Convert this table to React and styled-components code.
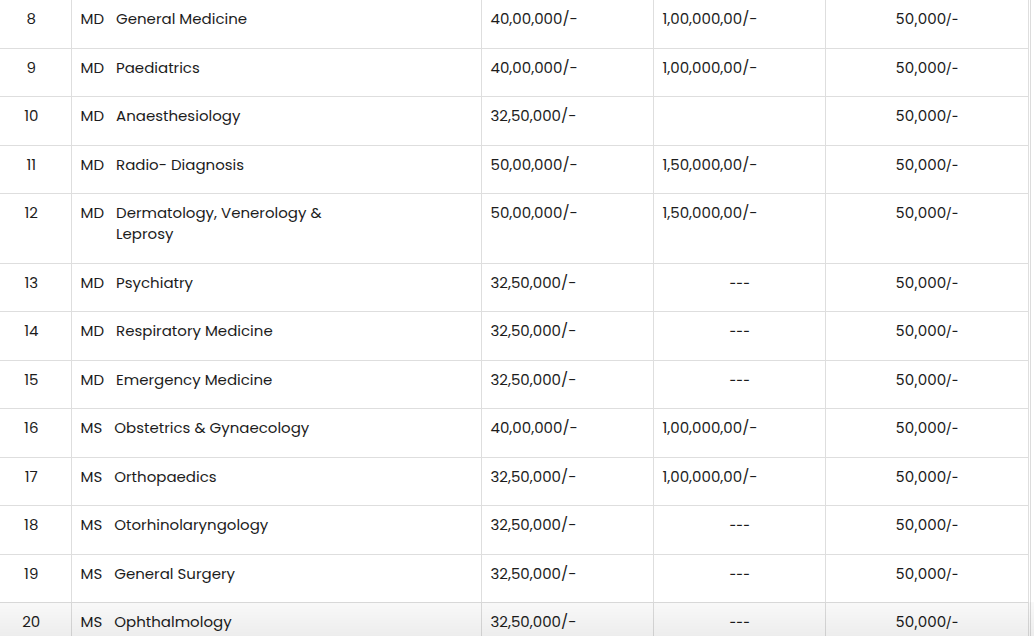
import React from "react";
import styled, { createGlobalStyle } from "styled-components";

const rows = [
  { no: 8, deg: "MD", name: "General Medicine", fee: "40,00,000/-", bond: "1,00,000,00/-", dep: "50,000/-" },
  { no: 9, deg: "MD", name: "Paediatrics", fee: "40,00,000/-", bond: "1,00,000,00/-", dep: "50,000/-" },
  { no: 10, deg: "MD", name: "Anaesthesiology", fee: "32,50,000/-", bond: "", dep: "50,000/-" },
  { no: 11, deg: "MD", name: "Radio- Diagnosis", fee: "50,00,000/-", bond: "1,50,000,00/-", dep: "50,000/-" },
  { no: 12, deg: "MD", name: "Dermatology, Venerology & Leprosy", fee: "50,00,000/-", bond: "1,50,000,00/-", dep: "50,000/-" },
  { no: 13, deg: "MD", name: "Psychiatry", fee: "32,50,000/-", bond: "---", dep: "50,000/-" },
  { no: 14, deg: "MD", name: "Respiratory Medicine", fee: "32,50,000/-", bond: "---", dep: "50,000/-" },
  { no: 15, deg: "MD", name: "Emergency Medicine", fee: "32,50,000/-", bond: "---", dep: "50,000/-" },
  { no: 16, deg: "MS", name: "Obstetrics & Gynaecology", fee: "40,00,000/-", bond: "1,00,000,00/-", dep: "50,000/-" },
  { no: 17, deg: "MS", name: "Orthopaedics", fee: "32,50,000/-", bond: "1,00,000,00/-", dep: "50,000/-" },
  { no: 18, deg: "MS", name: "Otorhinolaryngology", fee: "32,50,000/-", bond: "---", dep: "50,000/-" },
  { no: 19, deg: "MS", name: "General Surgery", fee: "32,50,000/-", bond: "---", dep: "50,000/-" },
  { no: 20, deg: "MS", name: "Ophthalmology", fee: "32,50,000/-", bond: "---", dep: "50,000/-" },
];

const GlobalStyle = createGlobalStyle`
  body {
    margin: 0;
    background: #fff;
    overflow: hidden;
    font-family: "Poppins", "Open Sans", "Noto Sans", sans-serif;
    color: #1c1c1c;
  }
`;

const Wrapper = styled.div`
  width: 1030px;
  border-right: 1px solid #dcdcdc;
  margin-top: -1px;
`;

const Table = styled.table`
  width: 1028px;
  border-collapse: collapse;
  table-layout: fixed;
`;

const Cell = styled.td`
  border: 1px solid #dedede;
  padding: 8px 8px 18.5px 9px;
  vertical-align: top;
  font-size: 15px;
  line-height: 21px;
  text-align: ${(p) => p.align || "left"};
  font-family: ${(p) =>
    p.plain ? `Inter, "Liberation Sans", sans-serif` : "inherit"};

  &:first-child {
    border-left: none;
    padding-left: 0;
  }
`;

const Course = styled.div`
  display: flex;
  align-items: flex-start;
`;

const Degree = styled.span`
  margin-right: 12px;
  flex: none;
`;

const Name = styled.span`
  max-width: 230px;
`;

const BottomShade = styled.div`
  position: fixed;
  left: 0;
  right: 0;
  bottom: 0;
  height: 34px;
  pointer-events: none;
  background: linear-gradient(to bottom, rgba(0, 0, 0, 0.025), rgba(0, 0, 0, 0.07));
`;

const App = () => {
  return (
    <>
      <GlobalStyle />
      <Wrapper>
        <Table>
          <colgroup>
            <col style={{ width: 71 }} />
            <col style={{ width: 410 }} />
            <col style={{ width: 172 }} />
            <col style={{ width: 172 }} />
            <col style={{ width: 203 }} />
          </colgroup>
          <tbody>
            {rows.map((r) => (
              <tr key={r.no}>
                <Cell align="center">{r.no}</Cell>
                <Cell>
                  <Course>
                    <Degree>{r.deg}</Degree>
                    <Name>{r.name}</Name>
                  </Course>
                </Cell>
                <Cell>{r.fee}</Cell>
                {r.bond === "---" ? (
                  <Cell align="center" plain>
                    {r.bond}
                  </Cell>
                ) : (
                  <Cell>{r.bond}</Cell>
                )}
                <Cell align="center" plain>
                  {r.dep}
                </Cell>
              </tr>
            ))}
          </tbody>
        </Table>
      </Wrapper>
      <BottomShade />
    </>
  );
};

export default App;
